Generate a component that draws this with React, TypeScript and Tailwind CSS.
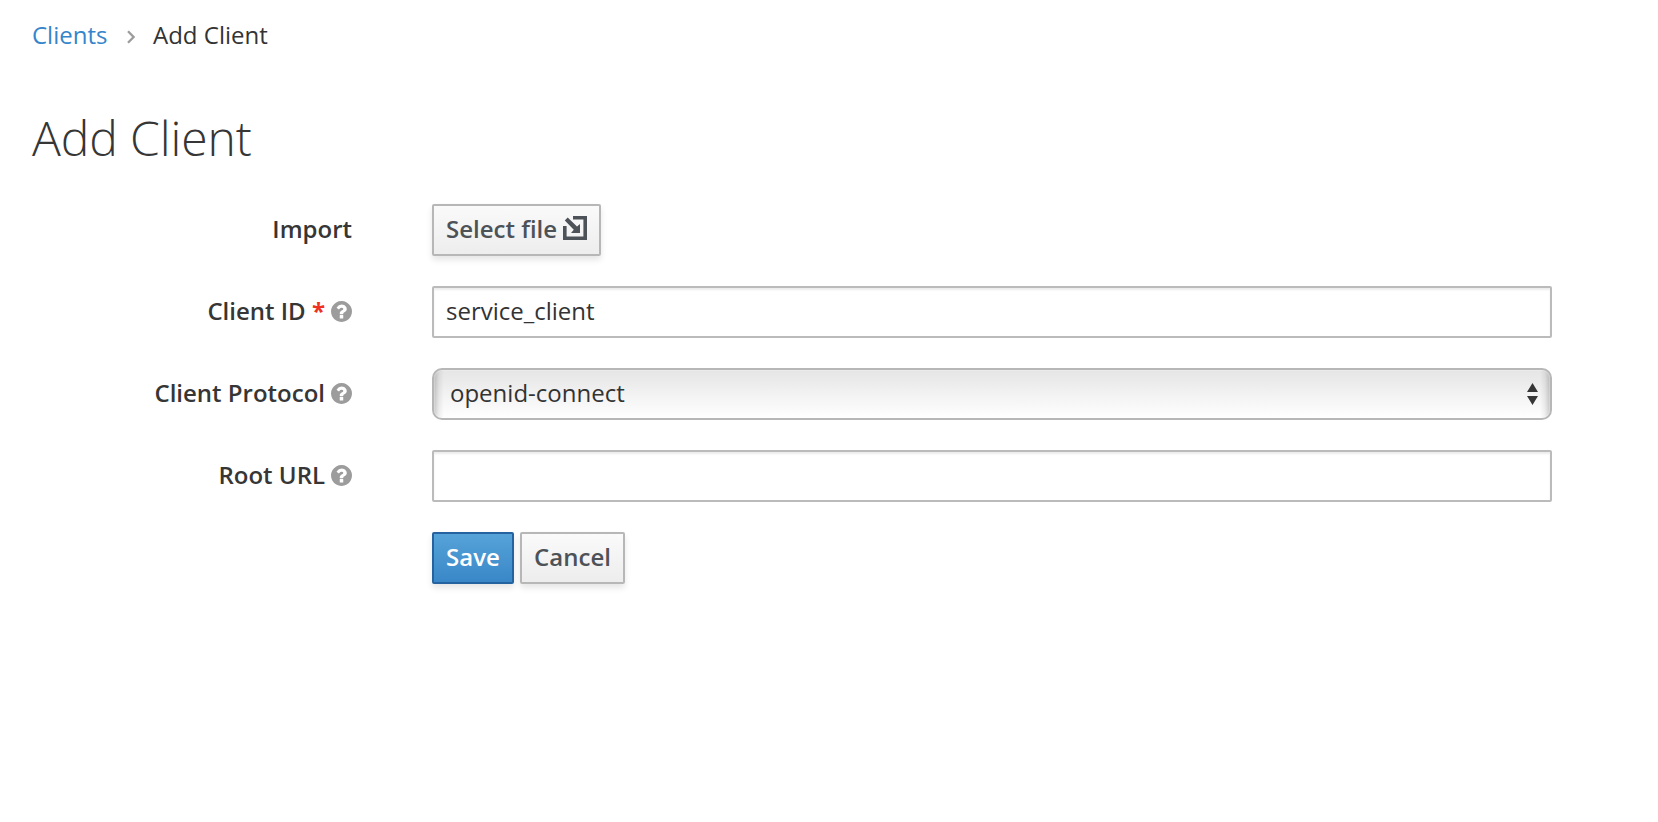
import type { ReactNode } from "react";

function HelpIcon() {
  return (
    <svg className="mt-px ml-[6px] h-[21px] w-[21px] shrink-0" viewBox="0 0 1536 1536" fill="#9c9c9c" aria-hidden="true">
      <path d="M896 1248v-192q0-14-9-23t-23-9H672q-14 0-23 9t-9 23v192q0 14 9 23t23 9h192q14 0 23-9t9-23zm256-672q0-88-55.500-163T958 297t-170-41q-243 0-371 213-15 24 8 42l132 100q7 6 19 6 16 0 25-12 53-68 86-92 34-24 86-24 48 0 85.500 26t37.500 59q0 38-20 61t-68 45q-63 28-115.500 86.500T640 892v36q0 14 9 23t23 9h192q14 0 23-9t9-23q0-19 21.500-49.500T972 829q32-18 49-28.500t46-35 44.500-48 28-60.500 12.500-81zm384 192q0 209-103 385.500T1153.500 1433 768 1536t-385.500-103T103 1153.500 0 768t103-385.500T382.500 103 768 0t385.500 103T1433 382.500 1536 768z" />
    </svg>
  );
}

function ImportIcon() {
  return (
    <svg className="mt-[-2px] ml-[6px] h-6 w-6 shrink-0" viewBox="0 0 24 24" aria-hidden="true">
      <path d="M10 0H24V24H0V10H3.600V20.400H20.400V3.600H10Z" fill="#4d5258" />
      <path d="M4.700 1.500L14 10.600L17 8V17H8L10.800 13.800L1.800 4.500Z" fill="#4d5258" />
    </svg>
  );
}

function Row({ label, required, help, children }: { label?: string; required?: boolean; help?: boolean; children: ReactNode }) {
  return (
    <div className="flex h-[52px]">
      <div className="mr-20 flex w-80 shrink-0 items-center justify-end pb-[2px] font-semibold whitespace-pre text-[#363636]">
        {label && <label>{label}</label>}
        {required && <span className="font-bold text-[#f0311f]"> *</span>}
        {help && <HelpIcon />}
      </div>
      {children}
    </div>
  );
}

const inputClass =
  "h-[52px] w-[1120px] rounded-[2px] border-2 border-[#bbb] bg-white px-3 pb-[3px] text-[#333] shadow-[inset_0_2px_2px_rgba(3,3,3,0.075)] outline-none";
const buttonClass =
  "flex h-[52px] items-center justify-center rounded-[2px] border-2 border-[#b7b7b7] bg-linear-to-b from-[#fafafa] to-[#ededed] pb-[2px] font-semibold text-[#4d5258] shadow-[0_4px_6px_rgba(3,3,3,0.1)]";

export default function App() {
  return (
    <main className="min-h-[822px] bg-white px-8 pt-[19px] font-['Open_Sans',sans-serif] text-2xl leading-8 text-[#333]">
      <nav className="flex h-8 items-center">
        <a href="#" className="w-[75px] whitespace-nowrap text-[#3485cb]">Clients</a>
        <svg className="mt-[3px] ml-5 h-[14px] w-2" viewBox="0 0 8 14" fill="none" stroke="#9c9c9c" strokeWidth="2.3" aria-hidden="true">
          <path d="M1 1.200L6.600 7L1 12.800" />
        </svg>
        <span className="ml-[18px]">Add Client</span>
      </nav>
      <h1 className="mt-[59px] h-[94px] text-[48px] leading-[56px] font-light tracking-[-0.1px] text-[#363636]">Add Client</h1>
      <form className="flex flex-col gap-[30px]" onSubmit={(e) => e.preventDefault()}>
        <Row label="Import">
          <button type="button" className={`${buttonClass} w-[169px]`}>
            Select file
            <ImportIcon />
          </button>
        </Row>
        <Row label="Client ID" required help>
          <input className={inputClass} defaultValue="service_client" />
        </Row>
        <Row label="Client Protocol" help>
          <div className="h-[52px] w-[1120px] overflow-hidden rounded-[10px] border-2 border-[#b7b7b7] bg-linear-to-b from-[#e5e5e5] to-white">
            <div className="flex h-full items-center justify-between rounded-[8px] bg-[linear-gradient(to_right,rgba(0,0,0,0.2),rgba(0,0,0,0.06)_5px,transparent_10px,transparent_1106px,rgba(0,0,0,0.06)_1111px,rgba(0,0,0,0.2))] pr-3 pl-4 shadow-[inset_0_0_0_1px_rgba(255,255,255,0.25)]">
              <span className="pb-[2px]">openid-connect</span>
              <svg className="h-[22px] w-[11px]" viewBox="0 0 11 22" fill="#363636" aria-hidden="true">
                <path d="M0 9L5.500 0L11 9ZM0 13H11L5.500 22Z" />
              </svg>
            </div>
          </div>
        </Row>
        <Row label="Root URL" help>
          <input className={inputClass} />
        </Row>
        <Row>
          <button type="submit" className="flex h-[52px] w-[82px] items-center justify-center rounded-[2px] border-2 border-[#2463a0] bg-linear-to-b from-[#55a3d8] to-[#3a87c8] pb-[2px] font-semibold text-white shadow-[0_4px_6px_rgba(3,3,3,0.1)]">
            Save
          </button>
          <button type="button" className={`${buttonClass} ml-[6px] w-[105px]`}>
            Cancel
          </button>
        </Row>
      </form>
    </main>
  );
}
